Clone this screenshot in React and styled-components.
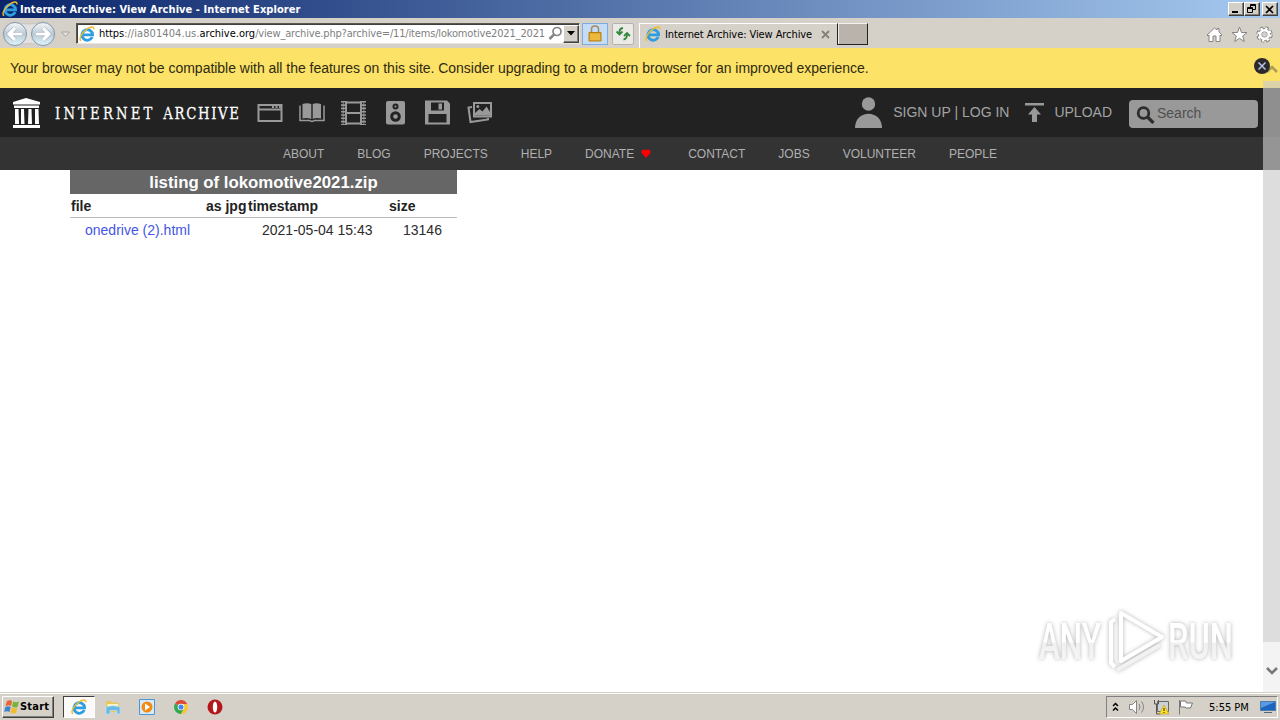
import React from 'react'
import styled, { createGlobalStyle } from 'styled-components'

const GlobalStyle = createGlobalStyle`
  * { box-sizing: border-box; }
  body { margin: 0; background: #fff; }
  svg { display: block; flex: none; }
`
const Screen = styled.div`
  width: 1280px;
  height: 720px;
  overflow: hidden;
  display: flex;
  flex-direction: column;
  background: #fff;
  font-family: 'Liberation Sans', Arial, sans-serif;
`

/* window chrome */
const TitleBar = styled.div`
  height: 18px;
  padding: 0 2px;
  display: flex;
  align-items: center;
  background: linear-gradient(90deg, #0a246a 0%, #a6caf0 100%);
`
const UiText = styled.span`
  font-family: 'DejaVu Sans Condensed', 'DejaVu Sans', sans-serif;
  font-stretch: condensed;
  font-size: 11px;
  line-height: 14px;
  white-space: pre;
  color: ${props => props.$color || '#000'};
  font-weight: ${props => props.$bold ? 'bold' : 'normal'};
  letter-spacing: ${props => props.$track || 0}px;
`
const TitleText = styled(UiText)`
  margin-left: 2px;
  padding-top: 1px;
  flex: 1;
`
const CaptionButton = styled.div`
  width: 16px;
  height: 14px;
  margin-left: ${props => props.$gap || 0}px;
  display: flex;
  align-items: center;
  justify-content: center;
  background: #d4d0c8;
  border: 1px solid;
  border-color: #fff #404040 #404040 #fff;
  box-shadow: inset -1px -1px 0 #808080;
`
const ToolBar = styled.div`
  height: 30px;
  display: flex;
  align-items: center;
  background: #d5d0c8;
  padding: 1px 7px 0 2px;
`
const AddressBar = styled.div`
  width: 504px;
  height: 21px;
  margin-left: 4px;
  padding-left: 2px;
  display: flex;
  align-items: center;
  background: #fff;
  border: 1px solid;
  border-color: #5c5850 #e8e5df #e8e5df #5c5850;
  box-shadow: inset 1px 1px 0 #404040;
`
const Url = styled.div`
  width: 449px;
  margin-left: 4px;
  display: flex;
`
const DropButton = styled(CaptionButton)`
  width: 16px;
  height: 18px;
`
const LockButton = styled.div`
  width: 26px;
  height: 22px;
  margin-left: 2px;
  display: flex;
  align-items: center;
  justify-content: center;
  background: #c5dcf7;
  border: 1px solid #7fabdf;
`
const RefreshButton = styled.div`
  width: 22px;
  height: 22px;
  margin-left: 4px;
  display: flex;
  align-items: center;
  justify-content: center;
  background: #eceae7;
  border: 1px solid #b4b2b0;
  border-radius: 2px;
`
const Tab = styled.div`
  width: 198px;
  height: 25px;
  margin: 3px 0 0 5px;
  padding: 0 7px 3px 5px;
  display: flex;
  align-items: center;
  gap: 4px;
  border-left: 1px solid #fff;
  border-top: 1px solid #fff;
`
const TabTitle = styled(UiText)`
  padding-top: 1px;
  flex: 1;
`
const NewTab = styled.div`
  width: 31px;
  height: 22px;
  background: #bab3ab;
  border: 1px solid;
  border-color: #f4f2ee #222 #222 #222;
  box-shadow: inset 1px 0 0 #eee;
`
const ChromeTools = styled.div`
  flex: 1;
  display: flex;
  justify-content: flex-end;
  align-items: center;
  gap: 8px;
  padding-top: 2px;
`

/* web page */
const Page = styled.div`
  position: relative;
  height: 644px;
`
const Banner = styled.div`
  height: 40px;
  padding: 0 10px;
  display: flex;
  align-items: center;
  justify-content: space-between;
  font-size: 14px;
  letter-spacing: -0.022px;
  color: #2f2a12;
  background: #fce267;
`
const CloseDot = styled.div`
  position: relative;
  z-index: 1;
  margin-top: -4px;
`
const TopNav = styled.div`
  height: 49px;
  padding: 0 22px 0 12px;
  display: flex;
  align-items: center;
  background: #222;
  font-size: 14px;
`
const MediaIcons = styled.div`
  display: flex;
  gap: 16px;
  margin-left: 17px;
`
const UserLinks = styled.div`
  flex: 1;
  display: flex;
  justify-content: flex-end;
  align-items: center;
`
const NavLink = styled.span`
  white-space: nowrap;
  color: #a3a3a3;
  padding-bottom: 2px;
  margin: 0 ${props => props.$after}px 0 ${props => props.$before}px;
`
const SearchBox = styled.div`
  width: 129px;
  height: 28px;
  margin-top: 3px;
  padding-left: 7px;
  display: flex;
  align-items: center;
  gap: 2px;
  border-radius: 4px;
  background: #999;
`
const SearchText = styled.span`
  padding-bottom: 2px;
  color: #505050;
`
const SubNav = styled.div`
  height: 33px;
  padding-left: 283px;
  display: flex;
  align-items: center;
  gap: 33px;
  background: #333;
  font-size: 12px;
  color: #b0b0b0;
`
const SubLink = styled.span`
  display: flex;
  align-items: center;
  gap: 7px;
  margin-right: ${props => props.$after || 0}px;
`
const Listing = styled.div`
  width: 387px;
  margin-left: 70px;
  font-size: 14px;
  line-height: 16px;
  color: #2c2c2c;
`
const Caption = styled.div`
  height: 24px;
  line-height: 25px;
  text-align: center;
  font-size: 16.8px;
  font-weight: bold;
  color: #fff;
  background: #666;
`
const Row = styled.div`
  height: 24px;
  padding: 4px 1px;
  display: grid;
  grid-template-columns: 135px 42px 141px 1fr;
  white-space: nowrap;
`
const HeadRow = styled(Row)`
  font-weight: bold;
  color: #222;
  border-bottom: 1px solid #bbb;
`
const Cell = styled.span`
  padding-left: 14px;
`
const FileLink = styled(Cell)`
  color: #4356e6;
`
const ScrollBar = styled.div`
  position: absolute;
  right: 0;
  top: 0;
  width: 17px;
  height: 644px;
  display: flex;
  flex-direction: column;
  align-items: center;
`
const ScrollUp = styled.div`
  height: 33px;
  padding-top: 17px;
`
const ScrollThumb = styled.div`
  width: 17px;
  height: 561px;
  background: rgba(203, 203, 203, 0.65);
`
const ScrollDown = styled.div`
  width: 17px;
  flex: 1;
  display: flex;
  justify-content: center;
  padding-top: 24px;
  background: #f3f3f3;
`
const Watermark = styled.div`
  position: absolute;
  left: 1030px;
  top: 554px;
  filter: drop-shadow(0 0 2px rgba(0, 0, 0, 0.3));
`

/* taskbar */
const TaskBar = styled.div`
  flex: 1;
  display: flex;
  align-items: center;
  padding: 1px 2px 0;
  background: #d5d0c8;
  border-top: 1px solid #d5d0c8;
  box-shadow: inset 0 1px 0 #fff;
`
const StartButton = styled.div`
  width: 52px;
  height: 22px;
  padding-left: 1px;
  display: flex;
  align-items: center;
  border: 1px solid;
  border-color: #fff #404040 #404040 #fff;
  box-shadow: inset -1px -1px 0 #808080;
`
const TaskButton = styled.div`
  width: ${props => props.$active ? 32 : 34}px;
  height: 22px;
  margin: 0 ${props => props.$active ? '1px 0 9px' : '0'};
  display: flex;
  align-items: center;
  justify-content: center;
  ${props => props.$active && `
    background: #fbfaf8;
    border: 1px solid;
    border-color: #404040 #fff #fff #404040;
  `}
`
const Tray = styled.div`
  width: 172px;
  height: 22px;
  margin-left: auto;
  padding: 0 1px 0 5px;
  display: flex;
  align-items: center;
  border: 1px solid;
  border-color: #808080 #fff #fff #808080;
`
const TrayIcons = styled.div`
  display: flex;
  gap: 8px;
  margin-left: 10px;
`
const Clock = styled(UiText)`
  flex: 1;
  margin-left: 15px;
  padding-top: 1px;
`

const IeIcon = ({ size = 16 }) => (
  <svg width={size} height={size} viewBox="0 0 16 16" fill="none">
    <path d="M13.200 11A5.300 5.300 0 1 1 13.600 8.800H4.400" stroke="#2e9ee0" strokeWidth="2.800" />
    <path d="M4.500 7a4 4 0 0 1 3-2.600" stroke="#9bdcfa" strokeWidth="1" />
    <path d="M2.200 14.600C-.8 14 2.200 7.400 7.200 3.500 11 .5 15.600-.3 14.800 3.400" stroke="#f1bb2b" strokeWidth="1.400" />
  </svg>
)

const HistoryButtons = () => (
  <svg width="70" height="28" viewBox="0 0 70 28">
    <defs>
      <linearGradient id="orb" x1="0" y1="0" x2="0" y2="1">
        <stop offset="0" stopColor="#f6f8fa" />
        <stop offset=".5" stopColor="#bccad6" />
        <stop offset="1" stopColor="#def6fc" />
      </linearGradient>
    </defs>
    <path d="M13 2Q27 6 41 2A12 12 0 0 1 41 26Q27 21 13 26A12 12 0 0 1 13 2Z" fill="#e3e1df" stroke="#c9c6c2" />
    {[13, 41].map(x => <circle key={x} cx={x} cy="14" r="11.500" fill="url(#orb)" stroke="#8798a8" />)}
    <path d="M20 14H8M13 8L7 14l6 6M34 14h12M41 8l6 6-6 6" fill="none" stroke="#8fa0af" strokeWidth="4.200" />
    <path d="M20 14H8M13 8L7 14l6 6M34 14h12M41 8l6 6-6 6" fill="none" stroke="#fff" strokeWidth="3.200" />
    <path d="M59.500 12h8l-4 4.500z" fill="#e4e1dc" stroke="#aaa6a2" />
  </svg>
)

const WebIcon = () => (
  <svg width="26" height="26" viewBox="0 0 26 26" fill="none" stroke="#999" strokeWidth="2">
    <path d="M1.500 5h23v16h-23zM2 9.500h22" />
    <path d="M15 7h2M18.500 7h2M22 7h2" strokeWidth="2" />
  </svg>
)
const BookIcon = () => (
  <svg width="26" height="26" viewBox="0 0 26 26" fill="#999">
    <path d="M3.500 4Q8 2.500 12.300 4V19Q8 17.500 3.500 18.500zM13.700 4Q17 2.500 22 4V18.500Q17 17.500 13.700 19z" />
    <path d="M1 5.500v15h9.300l2.700 1 2.700-1H25v-15" fill="none" stroke="#999" strokeWidth="1.500" />
  </svg>
)
const FilmIcon = () => (
  <svg width="26" height="26" viewBox="0 0 26 26" fill="none" stroke="#999">
    <path d="M5 1v24M20 1v24M5 2.500h15M5 13h15M5 23.500h15" strokeWidth="2" />
    <path d="M2 1v24M23 1v24" strokeWidth="4" strokeDasharray="1.600 1.700" />
    <path d="M2.200 1v24M22.800 1v24" strokeWidth=".8" />
  </svg>
)
const AudioIcon = () => (
  <svg width="26" height="26" viewBox="0 0 26 26">
    <rect x="3" y="1" width="19" height="23.500" rx="2" fill="#999" />
    <circle cx="12.500" cy="6.500" r="3" fill="#222" />
    <circle cx="12.500" cy="16.500" r="5.300" fill="#222" />
    <circle cx="12.500" cy="6.500" r="1" fill="#999" />
    <circle cx="12.500" cy="16.500" r="2.300" fill="#999" />
  </svg>
)
const DiskIcon = () => (
  <svg width="26" height="26" viewBox="0 0 26 26">
    <path d="M0 .5h22l3 3v21H0z" fill="#999" />
    <path d="M6 2.500h13v8H6zM3.500 14h18v8.500h-18z" fill="#222" />
    <path d="M13.500 3.500H17v6h-3.500z" fill="#999" />
  </svg>
)
const ImagesIcon = () => (
  <svg width="26" height="26" viewBox="0 0 26 26" fill="none" stroke="#999" strokeWidth="2">
    <path d="M7 3h17v13.500H7z" />
    <path d="M5 7l-3.500.5 2 14.500 17.500-2.500V18" />
    <path d="M8 15.500V13l4.500-4 3 2.500 4-5L23 12v3.500z" fill="#999" stroke="none" />
    <circle cx="10.800" cy="6.500" r="1.500" fill="#999" stroke="none" />
  </svg>
)

const Logo = () => (
  <svg width="228" height="34" viewBox="0 0 228 34" fill="#fff">
    <path d="M14 2L28 6v2.500H1V6zM2 9.500h25V12H2zM3 13h3.500l.5 15H3zM9 13h3l.5 15H9zM16.500 13h3l.5 15h-4zM23 13h3.500l.5 15h-4zM1 29h27v3H1z" />
    <g stroke="#fff" strokeWidth=".25" fontFamily="'DejaVu Serif Condensed', 'DejaVu Serif', serif" fontSize="17.500" transform="translate(43 23) scale(.84 1)">
      <text textLength="116">INTERNET</text>
      <text x="129" textLength="90">ARCHIVE</text>
    </g>
  </svg>
)

const AnyRun = () => (
  <svg width="230" height="80" viewBox="0 0 230 80" overflow="visible">
    <defs>
      <linearGradient id="mark" x1="0" y1="0" x2="0" y2="1">
        <stop offset=".5" stopColor="#fff" />
        <stop offset=".52" stopColor="#f0f0f0" />
        <stop offset="1" stopColor="#fafafa" />
      </linearGradient>
    </defs>
    <g fill="url(#mark)" fontFamily="Roboto, sans-serif" fontWeight="500" fontSize="50">
      <text x="9" y="57" textLength="62" lengthAdjust="spacingAndGlyphs">ANY</text>
      <text x="138" y="57" textLength="65" lengthAdjust="spacingAndGlyphs">RUN</text>
    </g>
    <g fill="none" stroke="#fff" strokeWidth="4" strokeLinejoin="round">
      <path d="M91 57V11l41 24-41 24z" />
      <path d="M85 17l-4 3v41l4 4" />
      <path d="M87 68l43-25" stroke="#f2f2f2" />
    </g>
  </svg>
)

const links = ['ABOUT', 'BLOG', 'PROJECTS', 'HELP', 'DONATE', 'CONTACT', 'JOBS', 'VOLUNTEER', 'PEOPLE']

const Heart = () => (
  <svg width="10" height="9" viewBox="0 0 11 10">
    <path d="M5.500 10L.8 4.600C-1 1.500 3.500-1 5.500 2 7.500-1 12 1.500 10.200 4.600z" fill="#f00" />
  </svg>
)

const BrowserChrome = () => (
  <>
    <TitleBar>
      <IeIcon />
      <TitleText $bold $color="#fff" $track={0.06}>Internet Archive: View Archive - Internet Explorer</TitleText>
      <CaptionButton>
        <svg width="12" height="10"><path d="M2 8h6" stroke="#000" strokeWidth="2" /></svg>
      </CaptionButton>
      <CaptionButton>
        <svg width="10" height="10" fill="none" stroke="#000"><path d="M3.500 3V.5h5v5H6M3 1.500h6M.5 3.500h5v5h-5zM0 4.500h6" /></svg>
      </CaptionButton>
      <CaptionButton $gap={2}>
        <svg width="10" height="9"><path d="M1 1l7 7M8 1L1 8" stroke="#000" strokeWidth="1.700" /></svg>
      </CaptionButton>
    </TitleBar>
    <ToolBar>
      <HistoryButtons />
      <AddressBar>
        <IeIcon />
        <Url>
          <UiText $track={-0.1}>https</UiText>
          <UiText $track={0.08} $color="#808080">://ia801404.us.</UiText>
          <UiText>archive.org</UiText>
          <UiText $track={-0.17} $color="#808080">/view_archive.php?archive=/11/items/lokomotive2021_2021</UiText>
        </Url>
        <svg width="16" height="15" viewBox="-1 0 16 15" fill="none" stroke="#858585">
          <circle cx="9" cy="5.500" r="4" strokeWidth="1.700" />
          <path d="M6 8.500L1.500 13" strokeWidth="2.500" />
        </svg>
        <DropButton>
          <svg width="8" height="5"><path d="M0 0h8L4 4.500z" /></svg>
        </DropButton>
      </AddressBar>
      <LockButton>
        <svg width="14" height="17" viewBox="0 0 14 17">
          <path d="M3.500 8V4a3.500 3 0 0 1 7 0v4" fill="none" stroke="#a58c58" strokeWidth="1.600" />
          <path d="M1 7.500h12v8.500H1z" fill="#e7a923" stroke="#b37c16" />
          <path d="M2 10h10M2 12h10M2 14h10" stroke="#f8d56d" strokeWidth=".7" />
        </svg>
      </LockButton>
      <RefreshButton>
        <svg width="16" height="16" viewBox="0 0 16 16" fill="none" stroke="#338a3c" strokeWidth="1.800">
          <path d="M8 2Q4 2.500 4.500 7M1.500 5.500l3 3 3-3M8.500 13.500q4-.5 3.500-6M9 10l3-3 3 3" />
        </svg>
      </RefreshButton>
      <Tab>
        <IeIcon />
        <TabTitle $track={-0.08}>Internet Archive: View Archive</TabTitle>
        <svg width="9" height="9"><path d="M1 1l7 7M8 1L1 8" stroke="#858078" strokeWidth="1.800" /></svg>
      </Tab>
      <NewTab />
      <ChromeTools>
        <svg width="17" height="17" viewBox="0 0 17 17" fill="#fff" stroke="#858585">
          <path d="M1 9l7.500-7L11 4V2.500h2v3.500L16 9l-1 1-1-1v6.500h-4V10H7v5.500H3V9l-1 1z" />
        </svg>
        <svg width="17" height="17" viewBox="0 0 17 17" fill="#fff" stroke="#858585">
          <path d="M8.500 1l2 5.500h5.500l-4.300 3.500 1.600 5.500-4.800-3.200-4.800 3.200L5.300 10 1 6.500h5.500z" />
        </svg>
        <svg width="17" height="17" viewBox="0 0 17 17" fill="none">
          <circle cx="8.500" cy="8.500" r="6.300" stroke="#858585" strokeWidth="3.800" strokeDasharray="3 1.950" />
          <circle cx="8.500" cy="8.500" r="4.500" stroke="#858585" strokeWidth="4" />
          <circle cx="8.500" cy="8.500" r="6" stroke="#fff" strokeWidth="2.400" strokeDasharray="2.200 2.510" />
          <circle cx="8.500" cy="8.500" r="4.300" stroke="#fff" strokeWidth="2.500" />
        </svg>
      </ChromeTools>
    </ToolBar>
  </>
)

const App = () => (
  <Screen>
    <GlobalStyle />
    <BrowserChrome />
    <Page>
      <Banner>
        <span>Your browser may not be compatible with all the features on this site. Consider upgrading to a modern browser for an improved experience.</span>
        <CloseDot>
          <svg width="16" height="16">
            <circle cx="8" cy="8" r="8" fill="#2a2a2c" />
            <path d="M4.500 4.500l7 7M11.500 4.500l-7 7" stroke="#b9c3e6" strokeWidth="1.500" />
          </svg>
        </CloseDot>
      </Banner>
      <TopNav>
        <Logo />
        <MediaIcons>
          <WebIcon />
          <BookIcon />
          <FilmIcon />
          <AudioIcon />
          <DiskIcon />
          <ImagesIcon />
        </MediaIcons>
        <UserLinks>
          <svg width="27" height="31" fill="#999">
            <circle cx="13.500" cy="7" r="6.700" />
            <path d="M0 31C0 12 27 12 27 31z" />
          </svg>
          <NavLink $before={11} $after={16}>SIGN UP | LOG IN</NavLink>
          <svg width="19" height="20" fill="#999">
            <path d="M0 0h19v2.500H0zM9.500 4l6.500 7.500h-4V19H7v-7.500H3z" />
          </svg>
          <NavLink $before={10} $after={17}>UPLOAD</NavLink>
          <SearchBox>
            <svg width="19" height="19" fill="none" stroke="#2d2d2d">
              <circle cx="7.500" cy="8" r="5.300" strokeWidth="2.800" />
              <path d="M11.500 12l6 6" strokeWidth="3.200" />
            </svg>
            <SearchText>Search</SearchText>
          </SearchBox>
        </UserLinks>
      </TopNav>
      <SubNav>
        {links.map(name => (
          <SubLink key={name} $after={name === 'DONATE' ? 4 : 0}>
            {name}
            {name === 'DONATE' && <Heart />}
          </SubLink>
        ))}
      </SubNav>
      <Listing>
        <Caption>listing of lokomotive2021.zip</Caption>
        <HeadRow>
          <span>file</span>
          <span>as jpg</span>
          <span>timestamp</span>
          <span>size</span>
        </HeadRow>
        <Row>
          <FileLink>onedrive (2).html</FileLink>
          <span />
          <Cell>2021-05-04 15:43</Cell>
          <Cell>13146</Cell>
        </Row>
      </Listing>
      <Watermark><AnyRun /></Watermark>
      <ScrollBar>
        <ScrollUp>
          <svg width="12" height="9"><path d="M1 7l5-5 5 5" fill="none" stroke="#ab9b58" strokeWidth="2.500" /></svg>
        </ScrollUp>
        <ScrollThumb />
        <ScrollDown>
          <svg width="12" height="9"><path d="M1 2l5 5 5-5" fill="none" stroke="#777" strokeWidth="2.500" /></svg>
        </ScrollDown>
      </ScrollBar>
    </Page>
    <TaskBar>
      <StartButton>
        <svg width="16" height="16" viewBox="0 0 16 16">
          <path d="M3 2q3-1.500 5 0L7 7Q4.500 5.500 1.500 7z" fill="#e8632e" />
          <path d="M9 2.500q3 1.500 6 0L13.500 8Q11 9 8 7.500z" fill="#78b33c" />
          <path d="M1.300 8Q4 6.500 6.700 8l-1.200 5Q3 11.500.2 13z" fill="#3e83cf" />
          <path d="M7.700 8.500q3 1.500 5.600.3L12 14q-3 1-5.500-.5z" fill="#f3bc2f" />
        </svg>
        <UiText $bold $track={0.2}>Start</UiText>
      </StartButton>
      <TaskButton $active><IeIcon /></TaskButton>
      <TaskButton>
        <svg width="16" height="16" viewBox="0 0 16 16">
          <path d="M1 2h5l1 1.500h7V13H1z" fill="#e9c75c" />
          <path d="M2.500 5H13v2H2.500z" fill="#fff6c8" />
          <path d="M1 8q7-2.500 14 0v7h-3v-3.500H5V15H1z" fill="#6ab9e5" stroke="#b9e2f5" strokeWidth=".7" />
        </svg>
      </TaskButton>
      <TaskButton>
        <svg width="16" height="16" viewBox="0 0 16 16">
          <path d="M.5.5h15v15H.5z" fill="#d7eafa" stroke="#4c94d4" />
          <circle cx="8" cy="8" r="5.500" fill="#f28a17" />
          <path d="M6 4.500v7l5-3.500z" fill="#fff" />
        </svg>
      </TaskButton>
      <TaskButton>
        <svg width="14" height="14" viewBox="0 0 16 16">
          <path d="M8 8L1.100 4A8 8 0 0 1 15 4z" fill="#df4937" />
          <path d="M8 8L1.100 4A8 8 0 0 0 8 16l3.500-6z" fill="#36a852" />
          <path d="M8 4.500h7.200A8 8 0 0 1 8 16l3.500-6z" fill="#fbc52d" />
          <circle cx="8" cy="8" r="3.800" fill="#fff" />
          <circle cx="8" cy="8" r="2.900" fill="#4285f4" />
        </svg>
      </TaskButton>
      <TaskButton>
        <svg width="16" height="16" viewBox="0 0 16 16">
          <circle cx="8" cy="8" r="7.500" fill="#b3171b" />
          <ellipse cx="8" cy="8" rx="2.200" ry="5.500" fill="#fff" />
        </svg>
      </TaskButton>
      <Tray>
        <svg width="7" height="10" fill="none" stroke="#000" strokeWidth="1.500"><path d="M1 4l2.500-2.500L6 4M1 8.500L3.500 6 6 8.500" /></svg>
        <TrayIcons>
          <svg width="16" height="16" fill="none" stroke="#858585">
            <path d="M.5 5.500h3l4-4v13l-4-4h-3z" fill="#fff" />
            <path d="M10 5q2 3 0 6M12.500 2.500q4 5.500 0 11" />
          </svg>
          <svg width="17" height="16">
            <path d="M4.500 2.500h11v10h-11z" fill="#ccd1d5" stroke="#666" />
            <path d="M1.500 1v4h4V1M3.500 5v10h4" fill="none" stroke="#555" />
            <path d="M11 6l5 9H6z" fill="#ffdf24" stroke="#b8951b" strokeWidth=".6" />
            <path d="M11 9v3M11 13v1" stroke="#222" />
          </svg>
          <svg width="16" height="16" fill="#fff" stroke="#777">
            <path d="M1.500 1v14.500M2.500 2h5l1 2h6l-2 5H8L7 8H2.500z" />
          </svg>
        </TrayIcons>
        <Clock>5:55 PM</Clock>
        <svg width="16" height="14" viewBox="0 0 16 14">
          <path d="M.5 1.500h15v9H.5z" fill="#1c64bd" stroke="#4d7eae" />
          <path d="M1 2h14L1 8z" fill="#5a9ae3" />
          <path d="M4 12.500h8" stroke="#536779" />
        </svg>
      </Tray>
    </TaskBar>
  </Screen>
)

export default App
